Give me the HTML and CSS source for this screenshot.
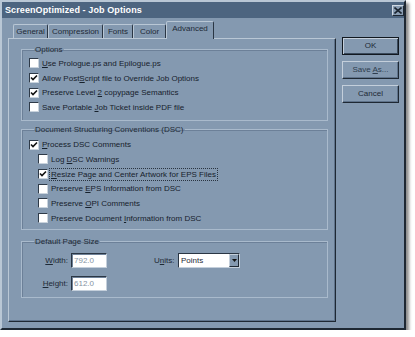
FILE: index.html
```html
<!DOCTYPE html>
<html>
<head>
<meta charset="utf-8">
<link rel="stylesheet" href="styles.css">
</head>
<body>
<div class="window">
  <div class="titlebar">
    <span class="title">ScreenOptimized - Job Options</span>
    <span class="close"><svg width="8" height="7" viewBox="0 0 8 7"><path d="M0.5 0.5 L7.5 6.5 M7.5 0.5 L0.5 6.5" stroke="#1b2530" stroke-width="1.6" fill="none"/></svg></span>
  </div>
  <div class="body">
    <div class="tabarea">
      <div class="tabs">
        <div class="tab t-general">General</div>
        <div class="tab t-compression">Compression</div>
        <div class="tab t-fonts">Fonts</div>
        <div class="tab t-color">Color</div>
        <div class="tab t-advanced selected">Advanced</div>
      </div>
      <div class="panel">
        <fieldset class="group g-options">
          <legend>Options</legend>
          <div class="row"><span class="cb"></span><span><u>U</u>se Prologue.ps and Epilogue.ps</span></div>
          <div class="row"><span class="cb on"><svg width="8" height="8" viewBox="0 0 8 8"><path d="M1 3.5 L3 5.5 L7 1.5" stroke="#111" stroke-width="1.6" fill="none"/></svg></span><span>Allow Post<u>S</u>cript file to Override Job Options</span></div>
          <div class="row"><span class="cb on"><svg width="8" height="8" viewBox="0 0 8 8"><path d="M1 3.5 L3 5.5 L7 1.5" stroke="#111" stroke-width="1.6" fill="none"/></svg></span><span>Preserve Level <u>2</u> copypage Semantics</span></div>
          <div class="row"><span class="cb"></span><span>Save Portable <u>J</u>ob Ticket inside PDF file</span></div>
        </fieldset>
        <fieldset class="group g-dsc">
          <legend>Document Structuring Conventions (DSC)</legend>
          <div class="row"><span class="cb on"><svg width="8" height="8" viewBox="0 0 8 8"><path d="M1 3.5 L3 5.5 L7 1.5" stroke="#111" stroke-width="1.6" fill="none"/></svg></span><span><u>P</u>rocess DSC Comments</span></div>
          <div class="row sub"><span class="cb"></span><span>Log <u>D</u>SC Warnings</span></div>
          <div class="row sub"><span class="cb on"><svg width="8" height="8" viewBox="0 0 8 8"><path d="M1 3.5 L3 5.5 L7 1.5" stroke="#111" stroke-width="1.6" fill="none"/></svg></span><span class="focus"><u>R</u>esize Page and Center Artwork for EPS Files</span></div>
          <div class="row sub"><span class="cb"></span><span>Preserve <u>E</u>PS Information from DSC</span></div>
          <div class="row sub"><span class="cb"></span><span>Preserve <u>O</u>PI Comments</span></div>
          <div class="row sub"><span class="cb"></span><span>Preserve Document <u>I</u>nformation from DSC</span></div>
        </fieldset>
        <fieldset class="group g-page">
          <legend>Default Page Size</legend>
          <div class="frow">
            <span class="flabel"><u>W</u>idth:</span>
            <span class="input">792.0</span>
            <span class="ulabel">U<u>n</u>its:</span>
            <span class="select"><span class="selval">Points</span><span class="selbtn"><svg width="5" height="3" viewBox="0 0 5 3"><path d="M0 0 H5 L2.5 3 Z" fill="#111"/></svg></span></span>
          </div>
          <div class="frow">
            <span class="flabel"><u>H</u>eight:</span>
            <span class="input">612.0</span>
          </div>
        </fieldset>
      </div>
    </div>
    <div class="buttons">
      <div class="btn default">OK</div>
      <div class="btn dim">Save <u>A</u>s...</div>
      <div class="btn">Cancel</div>
    </div>
  </div>
</div>
</body>
</html>
```
FILE: styles.css
```css
html, body {
  margin: 0;
  padding: 0;
  background: #ffffff;
}
body {
  font-family: "Liberation Sans", Arial, sans-serif;
  font-size: 8px;
  color: #17212c;
}
.window {
  width: 406px;
  height: 330px;
  box-sizing: border-box;
  background: #8499b0;
  border-style: solid;
  border-width: 2px;
  border-color: #b9c7d5 #1e2833 #1e2833 #b9c7d5;
  box-shadow: 3px 3px 3px rgba(0, 0, 0, 0.45);
  display: flex;
  flex-direction: column;
}
.titlebar {
  height: 16px;
  background: #4d6580;
  display: flex;
  align-items: center;
  justify-content: space-between;
  padding: 0 0 0 3px;
}
.title {
  font-weight: bold;
  font-size: 9px;
  color: #ffffff;
  letter-spacing: 0.1px;
}
.close {
  width: 12px;
  height: 11px;
  box-sizing: border-box;
  background: #8a9eb4;
  border-style: solid;
  border-width: 1px;
  border-color: #d0dae4 #1e2833 #1e2833 #d0dae4;
  display: flex;
  align-items: center;
  justify-content: center;
}
.body {
  display: flex;
  padding: 3px 0 0 6px;
}
.tabarea {
  width: 328px;
  display: flex;
  flex-direction: column;
}
.tabs {
  height: 17px;
  display: flex;
  align-items: flex-start;
  padding-left: 5px;
}
.tab {
  height: 14px;
  margin-top: 3px;
  box-sizing: border-box;
  line-height: 13px;
  text-align: center;
  color: #1e2a36;
  border-style: solid;
  border-width: 1px 1px 0 1px;
  border-color: #b9c7d5 #2a3644 transparent #b9c7d5;
  border-radius: 2px 2px 0 0;
}
.t-general { width: 35px; }
.t-compression { width: 55px; }
.t-fonts { width: 30px; }
.t-color { width: 33px; }
.t-advanced { width: 48px; }
.tab.selected {
  height: 18px;
  margin-top: 0;
  margin-bottom: -1px;
  line-height: 14px;
  background: #8499b0;
  position: relative;
  z-index: 1;
}
.panel {
  height: 284px;
  box-sizing: border-box;
  border-style: solid;
  border-width: 1px;
  border-color: #b9c7d5 #1e2833 #1e2833 #b9c7d5;
  box-shadow: inset -1px -1px 0 #5f738b;
  display: flex;
  flex-direction: column;
}
.group {
  margin: 0 7px 0 12px;
  padding: 0 4px 0 7px;
  border: 1px solid #a9bacc;
  box-shadow: inset 1px 1px 0 #6c8098;
  min-width: 0;
}
.group legend {
  padding: 0 1px;
  margin-left: 5px;
  height: 11px;
  line-height: 11px;
  color: #1e2a36;
}
.g-options {
  margin-top: 5px;
  padding-top: 1px;
  padding-bottom: 5px;
}
.g-dsc {
  margin-top: 3px;
  padding-top: 2.6px;
  padding-bottom: 4px;
}
.g-page {
  margin-top: 6px;
  padding-top: 6px;
  padding-bottom: 6px;
  display: flex;
  flex-direction: column;
  gap: 8px;
}
.row {
  height: 14.7px;
  display: flex;
  align-items: center;
  white-space: nowrap;
}
.row.sub {
  padding-left: 9px;
}
.cb {
  width: 10px;
  height: 10px;
  box-sizing: border-box;
  background: #ffffff;
  border-style: solid;
  border-width: 1px;
  border-color: #2e3a48 #c9d3dd #c9d3dd #2e3a48;
  margin-right: 3px;
  flex: none;
  display: flex;
  align-items: center;
  justify-content: center;
}
.cb svg {
  display: block;
}
.focus {
  outline: 1px dotted #2a3440;
  outline-offset: 0;
  padding: 0 1px;
  margin-left: -1px;
  line-height: 11px;
}
.frow {
  height: 15px;
  display: flex;
  align-items: center;
}
.flabel {
  width: 39px;
  text-align: right;
  margin-right: 3px;
  color: #1e2a36;
}
.input {
  width: 36px;
  height: 15px;
  box-sizing: border-box;
  background: #ffffff;
  border-style: solid;
  border-width: 1px;
  border-color: #2a3644 #c4cfdb #c4cfdb #2a3644;
  box-shadow: inset 1px 1px 0 #6f8299;
  color: #8593a3;
  padding-left: 2px;
  line-height: 13px;
}
.ulabel {
  margin-left: 47px;
  width: 24px;
  color: #1e2a36;
}
.select {
  width: 62px;
  height: 15px;
  box-sizing: border-box;
  background: #ffffff;
  border-style: solid;
  border-width: 1px;
  border-color: #2a3644 #c4cfdb #c4cfdb #2a3644;
  display: flex;
}
.selval {
  flex: 1;
  padding-left: 2px;
  line-height: 13px;
  color: #1e2a36;
}
.selbtn {
  width: 10px;
  box-sizing: border-box;
  background: #8499b0;
  border-style: solid;
  border-width: 1px;
  border-color: #c4cfdb #1e2833 #1e2833 #c4cfdb;
  display: flex;
  align-items: center;
  justify-content: center;
}
.buttons {
  display: flex;
  flex-direction: column;
  gap: 6px;
  margin-top: 16px;
  margin-left: 6px;
}
.btn {
  width: 57px;
  height: 18px;
  box-sizing: border-box;
  border-style: solid;
  border-width: 1px;
  border-color: #c4cfdb #1e2833 #1e2833 #c4cfdb;
  box-shadow: inset -1px -1px 0 #5f738b;
  text-align: center;
  line-height: 16px;
  color: #1e2a36;
}
.btn.default {
  border: 1px solid #111820;
  box-shadow: inset 1px 1px 0 #c4cfdb, inset -1px -1px 0 #3a4a5c;
}
.btn.dim {
  color: #2e3d4e;
}
```
